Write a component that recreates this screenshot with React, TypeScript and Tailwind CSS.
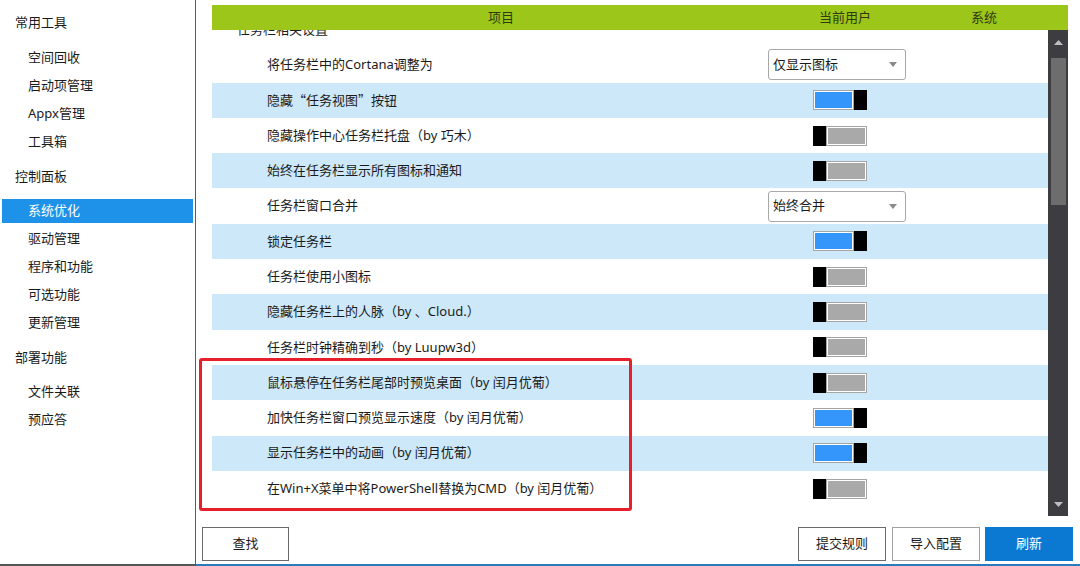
import React from "react";

const FONT = { fontFamily: '"Noto Sans", "Noto Sans CJK SC", sans-serif' };
const CJK = { fontFamily: '"Noto Sans CJK SC", sans-serif' };

type Row =
  | { label: React.ReactNode; key: string; kind: "toggle"; on: boolean }
  | { label: React.ReactNode; key: string; kind: "select"; value: string };

const rows: Row[] = [
  { key: "a", label: "将任务栏中的Cortana调整为", kind: "select", value: "仅显示图标" },
  {
    key: "b",
    label: (
      <>
        隐藏<span style={CJK}>“</span>任务视图<span style={CJK}>”</span>按钮
      </>
    ),
    kind: "toggle",
    on: true,
  },
  { key: "c", label: "隐藏操作中心任务栏托盘（by 巧木）", kind: "toggle", on: false },
  { key: "d", label: "始终在任务栏显示所有图标和通知", kind: "toggle", on: false },
  { key: "e", label: "任务栏窗口合并", kind: "select", value: "始终合并" },
  { key: "f", label: "锁定任务栏", kind: "toggle", on: true },
  { key: "g", label: "任务栏使用小图标", kind: "toggle", on: false },
  { key: "h", label: "隐藏任务栏上的人脉（by 、Cloud.）", kind: "toggle", on: false },
  { key: "i", label: "任务栏时钟精确到秒（by Luupw3d）", kind: "toggle", on: false },
  { key: "j", label: "鼠标悬停在任务栏尾部时预览桌面（by 闰月优葡）", kind: "toggle", on: false },
  { key: "k", label: "加快任务栏窗口预览显示速度（by 闰月优葡）", kind: "toggle", on: true },
  { key: "l", label: "显示任务栏中的动画（by 闰月优葡）", kind: "toggle", on: true },
  { key: "m", label: "在Win+X菜单中将PowerShell替换为CMD（by 闰月优葡）", kind: "toggle", on: false },
];

const groups = [
  { title: "常用工具", items: ["空间回收", "启动项管理", "Appx管理", "工具箱"] },
  { title: "控制面板", items: ["系统优化", "驱动管理", "程序和功能", "可选功能", "更新管理"] },
  { title: "部署功能", items: ["文件关联", "预应答"] },
];

function Toggle({ on }: { on: boolean }) {
  if (on) {
    return (
      <div className="flex h-[20px] w-[54px] ml-[45px]">
        <div className="flex-1 border border-[#a5a5a5] bg-white p-[1px]">
          <div className="h-full w-full bg-[#3496fb]" />
        </div>
        <div className="w-[13px] h-full bg-black" />
      </div>
    );
  }
  return (
    <div className="flex h-[20px] w-[54px] ml-[45px]">
      <div className="w-[13px] h-full bg-black" />
      <div className="flex-1 border border-[#a5a5a5] bg-white p-[1px]">
        <div className="h-full w-full bg-[#a9a9a9]" />
      </div>
    </div>
  );
}

function Select({ value }: { value: string }) {
  return (
    <div className="flex h-[31px] w-[138px] items-center justify-between rounded-[3px] border border-[#a8a8a8] bg-white pl-[4px] pr-[8px] text-[13px] text-[#1a1a1a]">
      <span>{value}</span>
      <svg width="8" height="5" viewBox="0 0 8 5">
        <path d="M0 0 L8 0 L4 5 Z" fill="#8a8a8a" />
      </svg>
    </div>
  );
}

export default function App() {
  return (
    <div className="relative flex h-[566px] w-[1080px] overflow-hidden bg-white text-[#1b1b1b]" style={FONT}>
      {/* Sidebar */}
      <div className="flex h-full w-[196px] shrink-0 flex-col border-r border-b-2 border-r-[#5c5c5c] border-b-[#555555] pt-[11px]">
        {groups.map((g, gi) => (
          <div key={g.title} className={gi === 0 ? "" : "mt-[11px]"}>
            <div className="flex h-[24px] items-center pl-[15px] text-[13px]">{g.title}</div>
            <div className={(gi === 0 ? "mt-[11px]" : "mt-[10px]") + " flex flex-col gap-[4px]"}>
              {g.items.map((it) => (
                <div
                  key={it}
                  className={
                    it === "系统优化"
                      ? "ml-[2px] mr-[2px] flex h-[24px] items-center bg-[#1e91e8] pl-[26px] text-[13px] text-white"
                      : "flex h-[24px] items-center pl-[28px] text-[13px]"
                  }
                >
                  {it}
                </div>
              ))}
            </div>
          </div>
        ))}
      </div>

      {/* Main */}
      <div className="flex h-full flex-1 flex-col border-b-2 border-[#2b7bbb]">
        <div className="flex flex-col pl-[16px] pr-[12px] pt-[5px]">
          {/* header */}
          <div className="relative z-10 flex h-[25px] items-center bg-[#9cc619] text-[13px] text-[#2f3a10]">
            <div className="w-[578px] text-center">项目</div>
            <div className="w-[110px] text-center">当前用户</div>
            <div className="flex-1 text-center">系统</div>
          </div>
          {/* list */}
          <div className="flex h-[486px]">
            <div className="flex-1 overflow-hidden">
              <div className="-mt-[18px] flex flex-col">
                <div className="flex h-[35.3px] items-center pl-[25px] text-[13px]">任务栏相关设置</div>
                {rows.map((r, i) => (
                  <div
                    key={r.key}
                    className={
                      "flex h-[35.3px] items-center text-[13px] " + (i % 2 === 1 ? "bg-[#cce8f9]" : "bg-white")
                    }
                  >
                    <div className="w-[556px] pl-[55px]">{r.label}</div>
                    <div className="w-[138px]">
                      {r.kind === "toggle" ? <Toggle on={r.on} /> : <Select value={r.value} />}
                    </div>
                  </div>
                ))}
              </div>
            </div>
            {/* scrollbar */}
            <div className="flex w-[20px] flex-col items-center bg-[#3d3c41] py-[2px]">
              <div className="flex h-[20px] items-center justify-center">
                <svg width="9" height="5" viewBox="0 0 9 5">
                  <path d="M0 5 L9 5 L4.5 0 Z" fill="#bdbdbd" />
                </svg>
              </div>
              <div className="mt-[6px] h-[147px] w-[15px] bg-[#6d6d6d]" />
              <div className="flex-1" />
              <div className="flex h-[20px] items-center justify-center">
                <svg width="9" height="5" viewBox="0 0 9 5">
                  <path d="M0 0 L9 0 L4.5 5 Z" fill="#bdbdbd" />
                </svg>
              </div>
            </div>
          </div>
        </div>
        {/* bottom buttons */}
        <div className="mt-[11px] flex h-[34px] items-stretch pl-[6px] pr-[7px] text-[13px]">
          <button className="w-[87px] border border-[#6a6a6a] bg-white">查找</button>
          <div className="flex-1" />
          <button className="w-[88px] border border-[#6a6a6a] bg-white">提交规则</button>
          <button className="ml-[6px] w-[88px] border border-[#a0a0a0] bg-white">导入配置</button>
          <button className="ml-[5px] w-[88px] bg-[#0b78d2] text-white">刷新</button>
        </div>
      </div>

      {/* red annotation */}
      <div className="pointer-events-none absolute left-[199px] top-[358px] h-[153px] w-[433px] rounded-[3px] border-[3px] border-[#e61f2a]" />
    </div>
  );
}
